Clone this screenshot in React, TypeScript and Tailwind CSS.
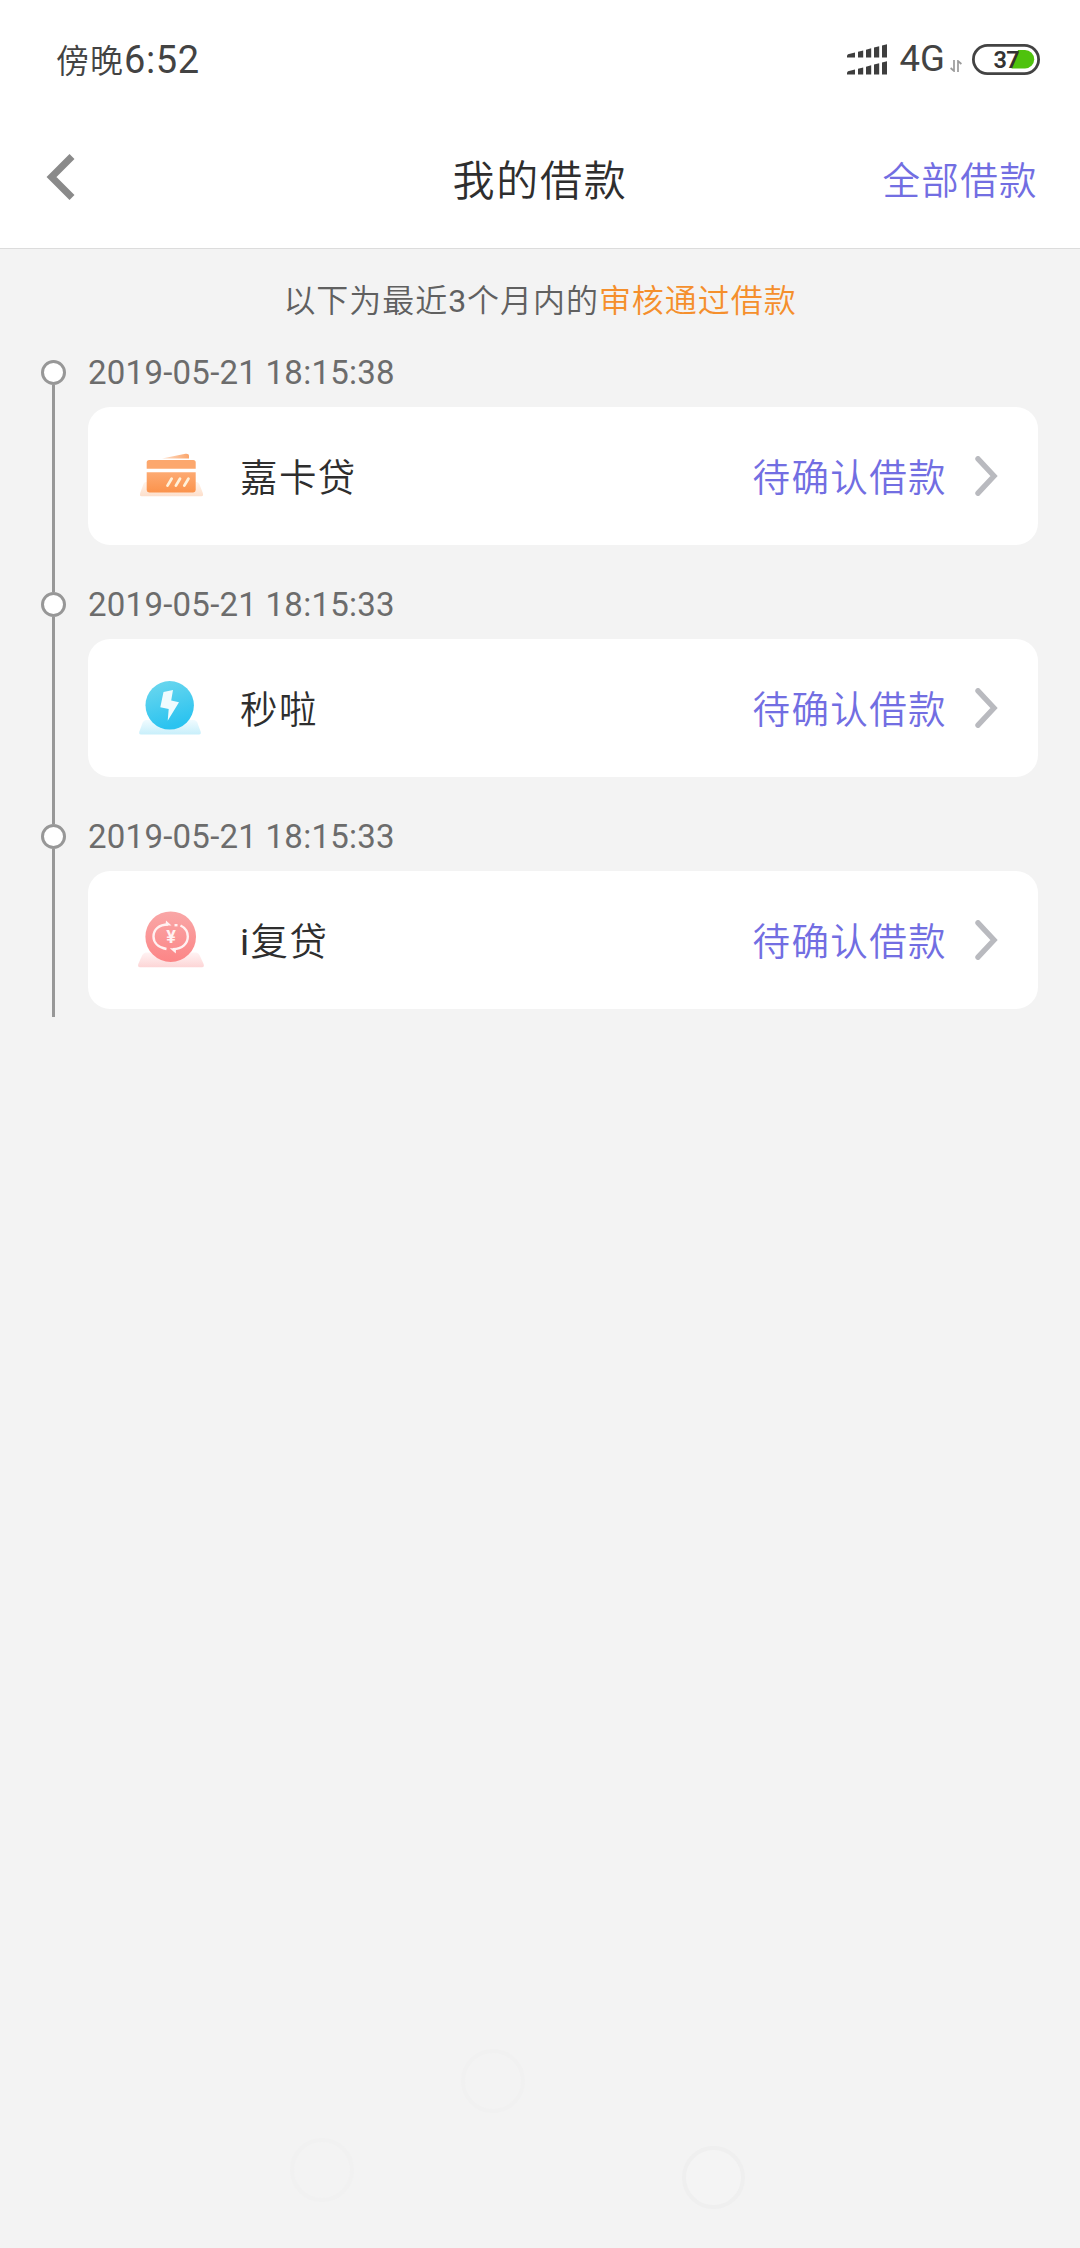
import type { ReactNode } from "react";

type Loan = {
  time: string;
  name: ReactNode;
  status: string;
  icon: ReactNode;
};

function SignalIcon() {
  const bars = [
    "M1 10.300L8 8.500V13.500H0V11.500Z",
    "M11 7.800L16.200 6.500V13.500H11Z",
    "M19 5.800L24.200 4.300V13.500H19Z",
    "M27 3.600L32.200 2.200V13.500H27Z",
    "M35 1.600L40 0.200V13.500H35Z",
  ];
  return (
    <svg className="h-[31px] w-10" viewBox="0 0 40 31" fill="#3e3e3e">
      {bars.map((d) => (
        <path key={d} d={d} />
      ))}
      <g transform="translate(0 17)">
        {bars.map((d) => (
          <path key={d} d={d} />
        ))}
      </g>
    </svg>
  );
}

function DataArrows() {
  return (
    <svg
      className="h-3 w-3"
      viewBox="0 0 12 12"
      fill="none"
      stroke="#9a9a9a"
      strokeWidth="1.700"
    >
      <path d="M4 0V11L0.600 8" />
      <path d="M8 12V1L11.400 4" />
    </svg>
  );
}

function Battery() {
  return (
    <svg className="h-[31px] w-[68px]" viewBox="0 0 68 31">
      <rect
        x="1.400"
        y="1.400"
        width="65.200"
        height="28.200"
        rx="14.100"
        fill="#fff"
        stroke="#434343"
        strokeWidth="2.800"
      />
      <path d="M46 6H53A9.200 9.200 0 0 1 53 24.400H39.500Z" fill="#4fc20d" />
      <text
        x="21.500"
        y="23.800"
        fill="#333"
        fontFamily="Roboto, sans-serif"
        fontSize="23.500"
        fontWeight="600"
        letterSpacing="-0.800"
      >
        37
      </text>
    </svg>
  );
}

function CardIcon() {
  return (
    <svg className="h-[72px] w-[72px]" viewBox="0 0 72 72">
      <defs>
        <linearGradient id="card" x1="0" y1="0" x2="0" y2="1">
          <stop offset="0" stopColor="#fdaa72" />
          <stop offset="1" stopColor="#fb934c" />
        </linearGradient>
        <linearGradient id="cardTop" x1="0" y1="0" x2="1" y2="0">
          <stop offset="0" stopColor="#fee0cb" />
          <stop offset="1" stopColor="#fba56a" />
        </linearGradient>
        <linearGradient id="cardBase" x1="0" y1="0" x2="0" y2="1">
          <stop offset="0" stopColor="#fff4ec" />
          <stop offset="1" stopColor="#fddfcb" />
        </linearGradient>
      </defs>
      <path
        d="M9.500 42H61Q62.500 42.500 63.300 44L66.800 53Q67.800 56.300 65.500 56.300H5.500Q3.300 56.300 4.200 53L7.500 44Q8 42.500 9.500 42Z"
        fill="url(#cardBase)"
      />
      <path d="M26 18.400L49.500 13.700Q53 13.300 53 16V18.400Z" fill="url(#cardTop)" />
      <path
        d="M10.700 28.800V22.500Q10.700 20 13.200 20H57.200Q59.700 20 59.700 22.500V28.800Z"
        fill="#fca76d"
      />
      <path
        d="M10.700 32.200H59.700V50Q59.700 52.400 57.200 52.400H13.200Q10.700 52.400 10.700 50Z"
        fill="url(#card)"
      />
      <path
        d="M35.600 38.800L31.500 45.600M44 38.800L39.900 45.600M52.400 38.800L48.300 45.600"
        stroke="#fff0d8"
        strokeWidth="2.800"
        strokeLinecap="round"
      />
    </svg>
  );
}

function BoltIcon() {
  return (
    <svg className="h-[72px] w-[72px]" viewBox="0 0 72 72">
      <defs>
        <linearGradient id="bolt" x1="0" y1="0" x2="0.300" y2="1">
          <stop offset="0" stopColor="#6fd8ee" />
          <stop offset="1" stopColor="#2bc3f0" />
        </linearGradient>
        <linearGradient id="boltBase" x1="0" y1="0" x2="0" y2="1">
          <stop offset="0" stopColor="#f0fbff" />
          <stop offset="1" stopColor="#c8effb" />
        </linearGradient>
      </defs>
      <path
        d="M9.500 48H58.500Q60.500 48.500 61.300 50.500L64.600 59.500Q65.500 62.400 63 62.400H5Q2.500 62.400 3.400 59.500L6.700 50.500Q7.500 48.500 9.500 48Z"
        fill="url(#boltBase)"
      />
      <circle cx="33.700" cy="33.300" r="24.200" fill="url(#bolt)" />
      <path
        d="M27.500 20L37 18L35.200 28.400L43 30.300L31.700 48.700L32.700 37L24.300 35.300Z"
        fill="#effbfe"
      />
    </svg>
  );
}

function YenIcon() {
  return (
    <svg className="h-[72px] w-[72px]" viewBox="0 0 72 72">
      <defs>
        <linearGradient id="yen" x1="0" y1="0" x2="0" y2="1">
          <stop offset="0" stopColor="#f9a7a7" />
          <stop offset="1" stopColor="#fc8586" />
        </linearGradient>
        <linearGradient id="yenBase" x1="0" y1="0" x2="0" y2="1">
          <stop offset="0" stopColor="#fff3f3" />
          <stop offset="1" stopColor="#fdd5d6" />
        </linearGradient>
      </defs>
      <path
        d="M9.500 48.500H60.500Q62.500 49 63.500 51L67.600 60Q68.600 63.200 66 63.200H4Q1.400 63.200 2.300 60L6.300 51Q7.500 49 9.500 48.500Z"
        fill="url(#yenBase)"
      />
      <circle cx="34.700" cy="32.700" r="25.300" fill="url(#yen)" />
      <g fill="none" stroke="#fff1f1" strokeWidth="2.400">
        <path d="M30.500 45C22 43.500 17.500 38.500 17.500 32.500C17.500 25.500 23 20.500 32 20.500" />
        <path d="M44.500 21.500C49.500 24 51.800 28 51.800 32.500C51.800 39.500 46.500 44.800 37 45.200" />
        <path d="M38.500 21.200H41.500" />
      </g>
      <path d="M30 16.500L35.500 21.600H29.500Z" fill="#fff1f1" />
      <path d="M39.800 49.500L33.800 44.200H40Z" fill="#fff1f1" />
      <text
        x="35"
        y="39"
        textAnchor="middle"
        fill="#fff1f1"
        fontFamily="Roboto, sans-serif"
        fontSize="18"
        fontWeight="700"
      >
        ¥
      </text>
    </svg>
  );
}

const loans: Loan[] = [
  {
    time: "2019-05-21 18:15:38",
    name: "嘉卡贷",
    status: "待确认借款",
    icon: <CardIcon />,
  },
  {
    time: "2019-05-21 18:15:33",
    name: "秒啦",
    status: "待确认借款",
    icon: <BoltIcon />,
  },
  {
    time: "2019-05-21 18:15:33",
    name: (
      <>
        <span className="font-normal">i</span>复贷
      </>
    ),
    status: "待确认借款",
    icon: <YenIcon />,
  },
];

function StatusBar() {
  return (
    <div className="flex h-[118px] items-center justify-between pl-14 pr-10 text-[#434343]">
      <div className="flex items-baseline pt-0.5 leading-none">
        <span className="text-[33px] font-[350] tracking-[1px]">傍晚</span>
        <span className="text-[38px] tracking-[0.600px]">6:52</span>
      </div>
      <div className="flex items-center">
        <SignalIcon />
        <span className="ml-[13px] text-[36.500px] leading-none">4G</span>
        <div className="ml-[5px] pt-3.5">
          <DataArrows />
        </div>
        <div className="ml-[10px]">
          <Battery />
        </div>
      </div>
    </div>
  );
}

function TitleBar() {
  return (
    <div className="grid h-[131px] grid-cols-3 items-center border-b border-[#dcdcdc] pl-[42px] pr-[42px]">
      <svg
        className="mb-[13px] ml-0.5 h-12 w-8"
        viewBox="0 0 32 48"
        fill="none"
        stroke="#8a8a8a"
        strokeWidth="7"
      >
        <path d="M28 3.500L7.500 24L28 44.500" />
      </svg>
      <h1 className="mb-[3px] text-center text-[42px] font-[350] leading-none tracking-[1.800px] text-[#2e2e2e]">
        我的借款
      </h1>
      <a className="mb-[3px] text-right text-[37.500px] font-[350] leading-none tracking-[1.400px] text-[#726ee2]">
        全部借款
      </a>
    </div>
  );
}

function LoanItem({ loan, last }: { loan: Loan; last: boolean }) {
  return (
    <li className="flex">
      <div className="flex w-[25px] flex-col items-center">
        <div className="h-[25px] w-[25px] shrink-0 rounded-full border-3 border-[#979797] bg-white" />
        <div className={last ? "h-[168px] w-[3px] bg-[#979797]" : "w-[3px] grow bg-[#979797]"} />
      </div>
      <div className={last ? "ml-[22px] grow" : "ml-[22px] grow pb-[47px]"}>
        <p className="h-[25px] text-[33px] leading-[25px] tracking-[0.250px] text-[#6c6c6c]">
          {loan.time}
        </p>
        <div className="mt-[22px] flex h-[138px] items-center rounded-[22px] bg-white pl-12 pr-[39px]">
          {loan.icon}
          <span className="ml-8 grow pt-[5px] text-[37.500px] font-[350] leading-none tracking-[1.400px] text-[#2e2e2e]">
            {loan.name}
          </span>
          <span className="pt-[5px] text-[37.500px] font-[350] leading-none tracking-[1.400px] text-[#726ee2]">
            {loan.status}
          </span>
          <svg
            className="ml-7 h-10 w-6"
            viewBox="0 0 24 40"
            fill="none"
            stroke="#b9babf"
            strokeWidth="5.400"
            strokeLinecap="round"
          >
            <path d="M3 2.800L19 20L3 37.200" />
          </svg>
        </div>
      </div>
    </li>
  );
}

export default function App() {
  return (
    <div className="relative h-[2248px] w-[1080px] overflow-hidden bg-[#f3f3f3] font-[Roboto,'Noto_Sans_CJK_SC',sans-serif]">
      <header className="bg-white">
        <StatusBar />
        <TitleBar />
      </header>

      <main>
        <p className="pt-9 text-center text-[32px] font-[350] leading-[32px] tracking-[0.950px] text-[#606060]">
          以下为最近<span className="font-normal">3</span>个月内的
          <span className="text-[#f58f2c]">审核通过借款</span>
        </p>
        <ul className="mt-[43px] pl-[41px] pr-[42px]">
          {loans.map((loan, i) => (
            <LoanItem key={i} loan={loan} last={i === loans.length - 1} />
          ))}
        </ul>
      </main>

      {/* faint navigation rings floating over the page */}
      <div className="absolute left-[461px] top-[2049px] h-16 w-16 rounded-full border-4 border-[#f1f1f1]" />
      <div className="absolute left-[290px] top-[2138px] h-16 w-16 rounded-full border-4 border-[#f1f1f1]" />
      <div className="absolute left-[682px] top-[2146px] h-[63px] w-[63px] rounded-full border-4 border-[#efefef] bg-[#f4f4f4]" />
    </div>
  );
}
